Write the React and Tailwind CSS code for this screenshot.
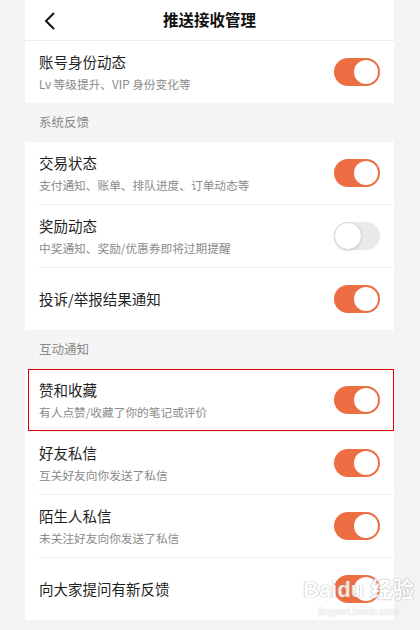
const font = { fontFamily: '"Noto Sans CJK SC", "Noto Sans", sans-serif' };

const sections = [
  {
    rows: [{ title: "账号身份动态", sub: "Lv 等级提升、VIP 身份变化等", on: true }],
  },
  {
    label: "系统反馈",
    rows: [
      { title: "交易状态", sub: "支付通知、账单、排队进度、订单动态等", on: true },
      { title: "奖励动态", sub: "中奖通知、奖励/优惠券即将过期提醒", on: false },
      { title: "投诉/举报结果通知", on: true },
    ],
  },
  {
    label: "互动通知",
    rows: [
      { title: "赞和收藏", sub: "有人点赞/收藏了你的笔记或评价", on: true, marked: true },
      { title: "好友私信", sub: "互关好友向你发送了私信", on: true },
      { title: "陌生人私信", sub: "未关注好友向你发送了私信", on: true },
      { title: "向大家提问有新反馈", on: true },
    ],
  },
];

function Toggle({ on }) {
  if (on) {
    return (
      <div className="w-[46px] h-[28px] rounded-full bg-[#ec6e42] flex items-center justify-end pr-[2px] shrink-0">
        <div className="w-[24px] h-[24px] rounded-full bg-white" />
      </div>
    );
  }
  return (
    <div className="w-[46px] h-[28px] rounded-full bg-[#e9e9e9] flex items-center shrink-0">
      <div className="w-[28px] h-[28px] rounded-full bg-white border border-[#d9d9d9] shadow-[0_1px_2px_rgba(0,0,0,0.12)]" />
    </div>
  );
}

function Row({ row, last }) {
  return (
    <div className="relative">
      <div className="flex items-center justify-between pl-[14px] pr-[14px] h-[62px]">
        <div className="flex flex-col">
          <div className="text-[14.5px] leading-[20px] text-[#1f1f1f]">{row.title}</div>
          {row.sub && (
            <div className="text-[11.7px] leading-[16px] text-[#8a8a8a] mt-[4px]">{row.sub}</div>
          )}
        </div>
        <Toggle on={row.on} />
      </div>
      {!last && <div className="ml-[14px] h-px bg-[#efefef]" />}
      {row.marked && (
        <div className="absolute left-[3px] right-0 top-0 bottom-[1px] border border-[#e60000]" />
      )}
    </div>
  );
}

export default function App() {
  return (
    <div className="w-[420px] h-[630px] bg-[#f3f3f3] overflow-hidden relative" style={font}>
      <div className="ml-[25px] w-[369px]">
        <div className="h-[41px] bg-white border-b border-[#ececec] relative flex items-center justify-center">
          <svg className="absolute left-[18px] top-[11px]" width="14" height="20" viewBox="0 0 14 20">
            <path d="M11 2 L3 10 L11 18" fill="none" stroke="#111" strokeWidth="2" />
          </svg>
          <div className="text-[15.5px] font-bold text-[#111]">推送接收管理</div>
        </div>
        {sections.map((s, i) => (
          <div key={i}>
            {s.label && (
              <div className="h-[39px] bg-[#f5f5f5] flex items-center pl-[14px] text-[12.5px] text-[#888]">
                {s.label}
              </div>
            )}
            <div className="bg-white">
              {s.rows.map((r, j) => (
                <Row key={j} row={r} last={j === s.rows.length - 1} />
              ))}
            </div>
          </div>
        ))}
      </div>
      <div className="absolute left-[303px] top-[578px] flex flex-col items-center opacity-80 pointer-events-none">
        <div
          className="text-[22px] leading-[24px] font-bold text-white"
          style={{ fontFamily: '"Liberation Sans", "Noto Sans CJK SC", sans-serif', textShadow: "0 0 1px #999, 0 0 1px #999" }}
        >
          Baidu 经验
        </div>
        <div
          className="text-[10px] leading-[12px] text-white mt-[4px]"
          style={{ fontFamily: '"Liberation Sans", sans-serif', textShadow: "0 0 1px #aaa" }}
        >
          jingyan.baidu.com
        </div>
      </div>
    </div>
  );
}
